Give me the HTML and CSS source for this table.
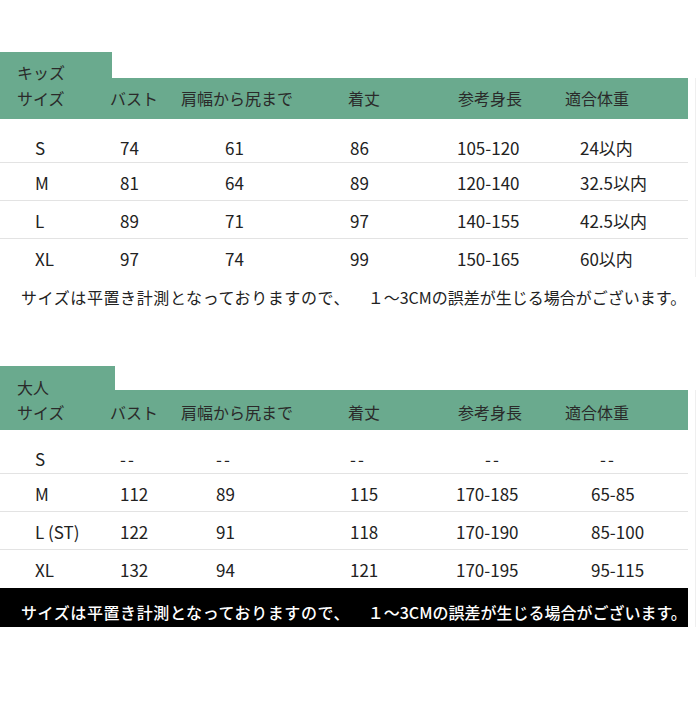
FILE: index.html
```html
<!DOCTYPE html>
<html lang="ja">
<head>
<meta charset="utf-8">
<title>サイズ表</title>
<link rel="stylesheet" href="styles.css">
</head>
<body>
<section class="block kids">
  <div class="tab">キッズ</div>
  <div class="panel">
    <div class="head">
      <span>サイズ</span><span>バスト</span><span>肩幅から尻まで</span><span>着丈</span><span>参考身長</span><span>適合体重</span>
    </div>
    <div class="row first">
      <span>S</span><span>74</span><span>61</span><span>86</span><span>105-120</span><span>24以内</span>
    </div>
    <div class="row">
      <span>M</span><span>81</span><span>64</span><span>89</span><span>120-140</span><span>32.5以内</span>
    </div>
    <div class="row">
      <span>L</span><span>89</span><span>71</span><span>97</span><span>140-155</span><span>42.5以内</span>
    </div>
    <div class="row last">
      <span>XL</span><span>97</span><span>74</span><span>99</span><span>150-165</span><span>60以内</span>
    </div>
  </div>
  <p class="note"><span class="note-a">サイズは平置き計測となっておりますので、</span> <span class="note-b">１～3CMの誤差が生じる場合がございます。</span></p>
</section>

<section class="block adults">
  <div class="tab">大人</div>
  <div class="panel">
    <div class="head">
      <span>サイズ</span><span>バスト</span><span>肩幅から尻まで</span><span>着丈</span><span>参考身長</span><span>適合体重</span>
    </div>
    <div class="row first">
      <span>S</span><span class="dash">--</span><span class="dash">--</span><span class="dash">--</span><span class="dash dash5">--</span><span class="dash dash6">--</span>
    </div>
    <div class="row">
      <span>M</span><span>112</span><span>89</span><span>115</span><span>170-185</span><span>65-85</span>
    </div>
    <div class="row">
      <span>L (ST)</span><span>122</span><span>91</span><span>118</span><span>170-190</span><span>85-100</span>
    </div>
    <div class="row last">
      <span>XL</span><span>132</span><span>94</span><span>121</span><span>170-195</span><span>95-115</span>
    </div>
    <p class="note dark"><span class="note-a">サイズは平置き計測となっておりますので、</span> <span class="note-b">１～3CMの誤差が生じる場合がございます。</span></p>
  </div>
</section>
</body>
</html>
```

FILE: styles.css
```css
html, body {
  margin: 0;
  padding: 0;
  background: #ffffff;
}

body {
  font-family: "Noto Sans CJK JP", "Noto Sans", sans-serif;
  font-size: 16px;
  color: #222222;
}

.block {
  width: 700px;
}

.kids {
  padding-top: 52px;
}

.adults {
  margin-top: 58px;
}

.tab {
  background: #6aaa8e;
  color: #2a2a2a;
  box-sizing: border-box;
  padding-left: 17px;
  line-height: 18px;
}

.kids .tab {
  width: 112px;
  height: 26px;
  padding-top: 11px;
}

.adults .tab {
  width: 115px;
  height: 24px;
  padding-top: 12px;
}

.panel {
  width: 696px;
  box-sizing: border-box;
  border-right: 1px solid #efefef;
}

.head {
  width: 688px;
  background: #6aaa8e;
  color: #2a2a2a;
  display: grid;
  grid-template-columns: 93px 71px 167px 110px 107px 1fr;
  padding-left: 17px;
  box-sizing: border-box;
  white-space: nowrap;
}

.kids .head {
  height: 41px;
  line-height: 41px;
}

.adults .head {
  height: 40px;
  padding-top: 4px;
  line-height: 36px;
}

.row {
  width: 688px;
  box-sizing: border-box;
  display: grid;
  padding-left: 35px;
  padding-top: 3px;
  line-height: 34px;
  font-size: 17px;
  border-bottom: 1px solid #e3e3e3;
  white-space: nowrap;
}

.row.first {
  padding-top: 14px;
  line-height: 29px;
}

.row.last {
  border-bottom-color: transparent;
}

.kids .row {
  grid-template-columns: 85px 105px 125px 107px 123px 1fr;
}

.adults .row {
  grid-template-columns: 85px 96px 134px 106px 135px 1fr;
}

.dash {
  letter-spacing: 2px;
}

.dash5 {
  padding-left: 29px;
}

.dash6 {
  padding-left: 9px;
}

.note {
  margin: 0;
  padding-left: 21px;
  white-space: nowrap;
  color: #222222;
}

.kids .note {
  margin-top: 9px;
  line-height: 22px;
}

.note-a {
  letter-spacing: 0.6px;
}

.note-b {
  margin-left: 14px;
}

.note.dark {
  width: 688px;
  box-sizing: border-box;
  background: #000000;
  color: #ffffff;
  height: 39px;
  padding-top: 12px;
  line-height: 24px;
  font-weight: 500;
}
```
